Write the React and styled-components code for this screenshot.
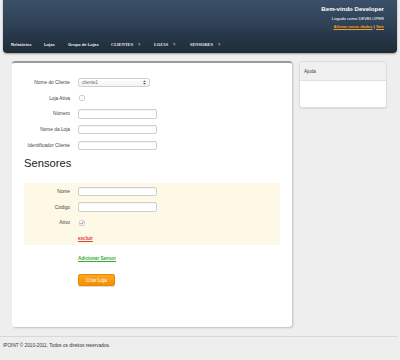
import React from 'react';
import styled, { createGlobalStyle } from 'styled-components';

const GlobalStyle = createGlobalStyle`
  body {
    margin: 0;
    background: #eeeeee;
    font-family: "Liberation Sans", Arial, sans-serif;
    color: #333;
  }
`;

const Page = styled.div`
  width: 400px;
  min-height: 360px;
`;

const Header = styled.header`
  margin: 0 3px;
  height: 53px;
  background: linear-gradient(#3b5169, #2b3c4f 60%, #24323f);
  border-radius: 0 0 4px 4px;
  box-shadow: 0 1px 2px rgba(0, 0, 0, 0.35);
  display: flex;
  flex-direction: column;
`;

const UserBox = styled.div`
  text-align: right;
  padding: 5px 13px 0 0;
  color: #fff;
  height: 31px;
  box-sizing: border-box;
`;

const Welcome = styled.div`
  font-size: 6.1px;
  font-weight: bold;
  line-height: 8px;
`;

const Logged = styled.div`
  font-size: 4.2px;
  line-height: 5px;
  margin-top: 3px;
`;

const UserLinks = styled.div`
  font-size: 4.2px;
  line-height: 5px;
  margin-top: 3px;
  color: #fff;
  a {
    color: #f0a020;
    font-weight: bold;
    text-decoration: underline;
  }
`;

const Nav = styled.nav`
  flex: 1;
  display: flex;
  align-items: center;
  padding: 4px 0 0 8px;
  background: linear-gradient(rgba(0, 0, 0, 0.03), rgba(0, 0, 0, 0.12));
  border-radius: 0 0 4px 4px;
`;

const NavItem = styled.span`
  color: #e8edf2;
  font-weight: bold;
  font-size: ${p => (p.menu ? '4.4px' : '4.2px')};
  font-family: ${p => (p.menu ? '"Liberation Serif", serif' : 'inherit')};
  display: flex;
  align-items: center;
  width: ${p => p.w}px;
`;

const Caret = styled.span`
  color: #6c7f94;
  font-size: 5px;
  margin-left: 5px;
`;

const Content = styled.div`
  display: flex;
  align-items: flex-start;
  gap: 7px;
  padding: 8px 13px 0 12px;
`;

const Main = styled.main`
  width: 280px;
  height: 266px;
  box-sizing: border-box;
  background: #fff;
  border-top: 2px solid #9a9a9a;
  border-radius: 3px;
  box-shadow: 1px 1px 2px rgba(0, 0, 0, 0.2);
  padding: 11.6px 12px 0 12px;
`;

const Form = styled.div`
  display: grid;
  grid-template-columns: 46px auto;
  column-gap: 8px;
  align-items: center;
  justify-items: start;
  grid-auto-rows: 15.75px;
`;

const Label = styled.label`
  justify-self: end;
  text-align: right;
  font-size: 4.8px;
  color: #444;
  white-space: nowrap;
`;

const Input = styled.div`
  width: 79px;
  height: 9.5px;
  box-sizing: border-box;
  background: #fff;
  border: 1px solid #cfcfcf;
  border-radius: 2px;
  box-shadow: inset 0 1px 1px rgba(0, 0, 0, 0.04);
`;

const Select = styled.div`
  width: 72px;
  height: 9px;
  box-sizing: border-box;
  border: 1px solid #cfcfcf;
  border-radius: 2.5px;
  background: linear-gradient(#fff, #f2f2f2);
  display: flex;
  align-items: center;
  justify-content: space-between;
  padding: 0 3px 0 3px;
  font-size: 4.6px;
  color: #666;
`;

const Check = styled.div`
  width: 6px;
  height: 6px;
  box-sizing: border-box;
  border: 1px solid #cfcfcf;
  border-radius: 1.5px;
  background: #fafafa;
  margin-left: 1px;
  display: flex;
  align-items: center;
  justify-content: center;
`;

const Heading = styled.h2`
  margin: 0.6px 0 0 0;
  font-weight: normal;
  font-size: 11.2px;
  line-height: 18px;
  color: #222;
`;

const SensorBox = styled.div`
  margin-top: 11px;
  background: #fdf9e6;
  padding: 0.6px 0 0 0;
  height: 62px;
  box-sizing: border-box;
`;

const TextLink = styled.a`
  font-size: 4.6px;
  line-height: 5px;
  text-decoration: underline;
  color: ${p => p.color};
  font-weight: bold;
`;

const Actions = styled.div`
  padding: 11.5px 0 0 54px;
  display: flex;
  flex-direction: column;
  align-items: flex-start;
`;

const Button = styled.button`
  margin-top: 13px;
  width: 37px;
  height: 12px;
  padding: 0;
  border: 1px solid #e78a00;
  border-radius: 2px;
  background: linear-gradient(#ffa726, #f58f00);
  color: #fff;
  font-family: inherit;
  font-size: 4.8px;
  box-shadow: 0 1px 1px rgba(0, 0, 0, 0.15);
`;

const Aside = styled.aside`
  width: 88px;
  height: 47px;
  box-sizing: border-box;
  background: #fff;
  border: 1px solid #dcdcdc;
  border-radius: 3px;
  box-shadow: 0 1px 1px rgba(0, 0, 0, 0.08);
  overflow: hidden;
`;

const AsideTitle = styled.div`
  height: 18px;
  background: #f0f0f0;
  border-bottom: 1px solid #e0e0e0;
  display: flex;
  align-items: center;
  padding-left: 4px;
  font-size: 4.6px;
  color: #2e3e50;
`;

const Footer = styled.footer`
  margin-top: 9px;
  margin-right: 3px;
  border-top: 1px solid #d8d8d8;
  padding: 6px 0 0 3px;
  font-size: 4.7px;
  color: #333;
`;

const SelectArrows = () => (
  <svg width="3" height="5" viewBox="0 0 3 5">
    <path d="M0 2 L1.5 0.5 L3 2 Z M0 3 L1.5 4.5 L3 3 Z" fill="#555" />
  </svg>
);

const Tick = () => (
  <svg width="4" height="4" viewBox="0 0 4 4">
    <path d="M0.6 2.2 L1.6 3.2 L3.4 0.6" stroke="#555" strokeWidth="0.7" fill="none" />
  </svg>
);

const menu = [
  { label: 'Relatórios', w: 33 },
  { label: 'Lojas', w: 24 },
  { label: 'Grupo de Lojas', w: 43 },
  { label: 'CLIENTES', w: 43, menu: true },
  { label: 'LOJAS', w: 36, menu: true },
  { label: 'SENSORES', w: 40, menu: true },
];

const App = () => (
  <Page>
    <GlobalStyle />
    <Header>
      <UserBox>
        <Welcome>Bem-vindo Developer</Welcome>
        <Logged>Logado como DEVELOPER</Logged>
        <UserLinks>
          <a>Alterar meus dados</a> | <a>Sair</a>
        </UserLinks>
      </UserBox>
      <Nav>
        {menu.map(item => (
          <NavItem key={item.label} w={item.w} menu={item.menu}>
            {item.label}
            {item.menu && <Caret>▾</Caret>}
          </NavItem>
        ))}
      </Nav>
    </Header>

    <Content>
      <Main>
        <Form>
          <Label>Nome do Cliente</Label>
          <Select>
            <span>cliente1</span>
            <SelectArrows />
          </Select>
          <Label>Loja Ativa</Label>
          <Check />
          <Label>Número</Label>
          <Input />
          <Label>Nome da Loja</Label>
          <Input />
          <Label>Identificador Cliente</Label>
          <Input />
        </Form>

        <Heading>Sensores</Heading>

        <SensorBox>
          <Form>
            <Label>Nome</Label>
            <Input />
            <Label>Código</Label>
            <Input />
            <Label>Ativo</Label>
            <Check>
              <Tick />
            </Check>
            <span />
            <TextLink color="#e0403a">excluir</TextLink>
          </Form>
        </SensorBox>

        <Actions>
          <TextLink color="#3aa83a">Adicionar Sensor</TextLink>
          <Button>Criar Loja</Button>
        </Actions>
      </Main>

      <Aside>
        <AsideTitle>Ajuda</AsideTitle>
      </Aside>
    </Content>

    <Footer>IPOINT © 2010-2011, Todos os direitos reservados.</Footer>
  </Page>
);

export default App;
